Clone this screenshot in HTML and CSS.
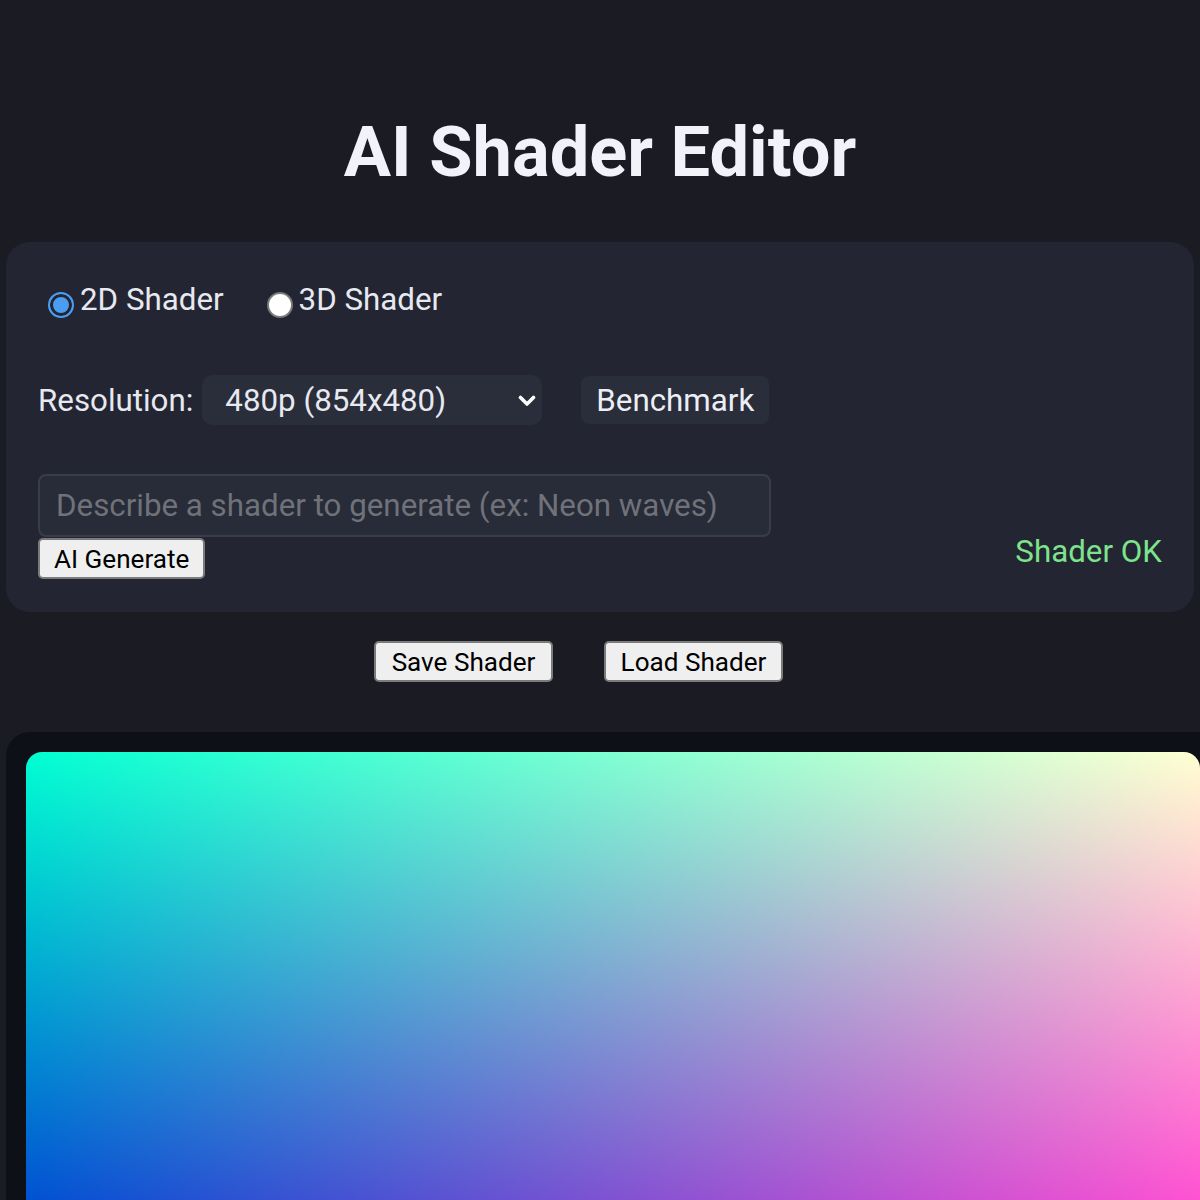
FILE: index.html
```html
<!DOCTYPE html>
<html lang="en">
<head>
<meta charset="utf-8">
<title>AI Shader Editor</title>
<link rel="stylesheet" href="styles.css">
</head>
<body>
  <h1 class="title">AI Shader Editor</h1>

  <section class="panel">
    <div class="mode-row">
      <label class="mode"><input type="radio" name="mode" class="radio" checked>2D Shader</label>
      <label class="mode"><input type="radio" name="mode" class="radio">3D Shader</label>
    </div>

    <div class="res-row">
      <span class="res-label">Resolution:</span>
      <div class="select">
        <span>480p (854x480)</span>
        <svg class="chev" width="18" height="12" viewBox="0 0 18 12"><polyline points="2.5,2.5 9,9 15.5,2.5" fill="none" stroke="#ffffff" stroke-width="3.6" stroke-linecap="round" stroke-linejoin="round"/></svg>
      </div>
      <button class="bench">Benchmark</button>
    </div>

    <div class="gen-row">
      <div class="gen-col">
        <input class="prompt" type="text" placeholder="Describe a shader to generate (ex: Neon waves)">
        <button class="btn">AI Generate</button>
      </div>
      <span class="status">Shader OK</span>
    </div>
  </section>

  <div class="file-row">
    <button class="btn">Save Shader</button>
    <button class="btn">Load Shader</button>
  </div>

  <div class="canvas-wrap">
    <div class="canvas"></div>
  </div>
</body>
</html>
```
FILE: styles.css
```css
html, body {
  margin: 0;
  padding: 0;
  overflow: hidden;
  background: #1b1c23;
}
body {
  font-family: Roboto, "Liberation Sans", sans-serif;
  color: #e7e9f1;
}
.title {
  margin: 110px 0 48px;
  text-align: center;
  font-size: 70.4px;
  font-weight: 700;
  line-height: 84px;
  color: #f2f3f9;
}
.panel {
  margin: 0 6px;
  padding: 39px 32px 33px;
  background: #232532;
  border-radius: 24px;
}
.mode-row {
  display: flex;
  align-items: center;
  font-size: 31.3px;
  line-height: 37px;
}
.mode {
  display: flex;
  align-items: center;
  margin-right: 33px;
}
.radio {
  appearance: none;
  -webkit-appearance: none;
  width: 26px;
  height: 26px;
  margin: 11px 6px 0 10px;
  border-radius: 50%;
  box-sizing: border-box;
  border: 2px solid #7a7a7a;
  background: #ffffff;
}
.radio:checked {
  border: 2px solid #4b9df2;
  background: #4b9df2;
  box-shadow: inset 0 0 0 3px #232532;
}
.res-row {
  display: flex;
  align-items: center;
  margin-top: 57px;
  font-size: 31.3px;
}
.res-label {
  margin-right: 9px;
}
.select {
  box-sizing: border-box;
  width: 340px;
  height: 50px;
  padding: 0 6px 0 23px;
  display: flex;
  align-items: center;
  justify-content: space-between;
  background: #2a2d3a;
  border-radius: 10px;
  color: #e7e9f1;
}
.chev {
  margin-top: 2px;
}
.bench {
  box-sizing: border-box;
  margin-left: 39px;
  height: 48px;
  padding: 0 15px;
  border: none;
  border-radius: 8px;
  background: #2a2d3a;
  color: #eceef5;
  font-family: inherit;
  font-size: 31.3px;
}
.gen-row {
  display: flex;
  justify-content: space-between;
  align-items: flex-end;
  margin-top: 49px;
}
.gen-col {
  display: flex;
  flex-direction: column;
  align-items: flex-start;
}
.prompt {
  box-sizing: border-box;
  width: 733px;
  height: 63px;
  margin: 0 0 1px;
  padding: 0 16px;
  border: 2px solid #393c4a;
  border-radius: 8px;
  background: #282b38;
  color: #e7e9f1;
  font-family: inherit;
  font-size: 31.3px;
  outline: none;
}
.prompt::placeholder {
  color: #6f7279;
}
.btn {
  box-sizing: border-box;
  height: 41px;
  padding: 0 14px;
  border: 2px solid #7b7b7b;
  border-radius: 5px;
  background: #efefef;
  color: #000;
  font-family: Roboto, "Liberation Sans", sans-serif;
  font-size: 26.1px;
  line-height: normal;
}
.status {
  color: #7de38c;
  font-size: 31.3px;
  line-height: 37px;
  margin-bottom: 9px;
}
.file-row {
  display: flex;
  justify-content: center;
  gap: 51px;
  margin-top: 29px;
  padding-right: 43px;
}
.file-row .btn {
  width: 179px;
  padding: 0;
}
.canvas-wrap {
  width: fit-content;
  margin: 50px 0 0 6px;
  padding: 20px;
  background: #0e1017;
  border-radius: 24px;
}
.canvas {
  width: 1174px;
  height: 660px;
  border-radius: 16px;
  background:
    linear-gradient(to bottom, rgb(0, 255, 210), rgb(0, 0, 210)),
    linear-gradient(to right, rgb(0, 0, 210), rgb(255, 0, 210));
  background-blend-mode: lighten;
}
```
